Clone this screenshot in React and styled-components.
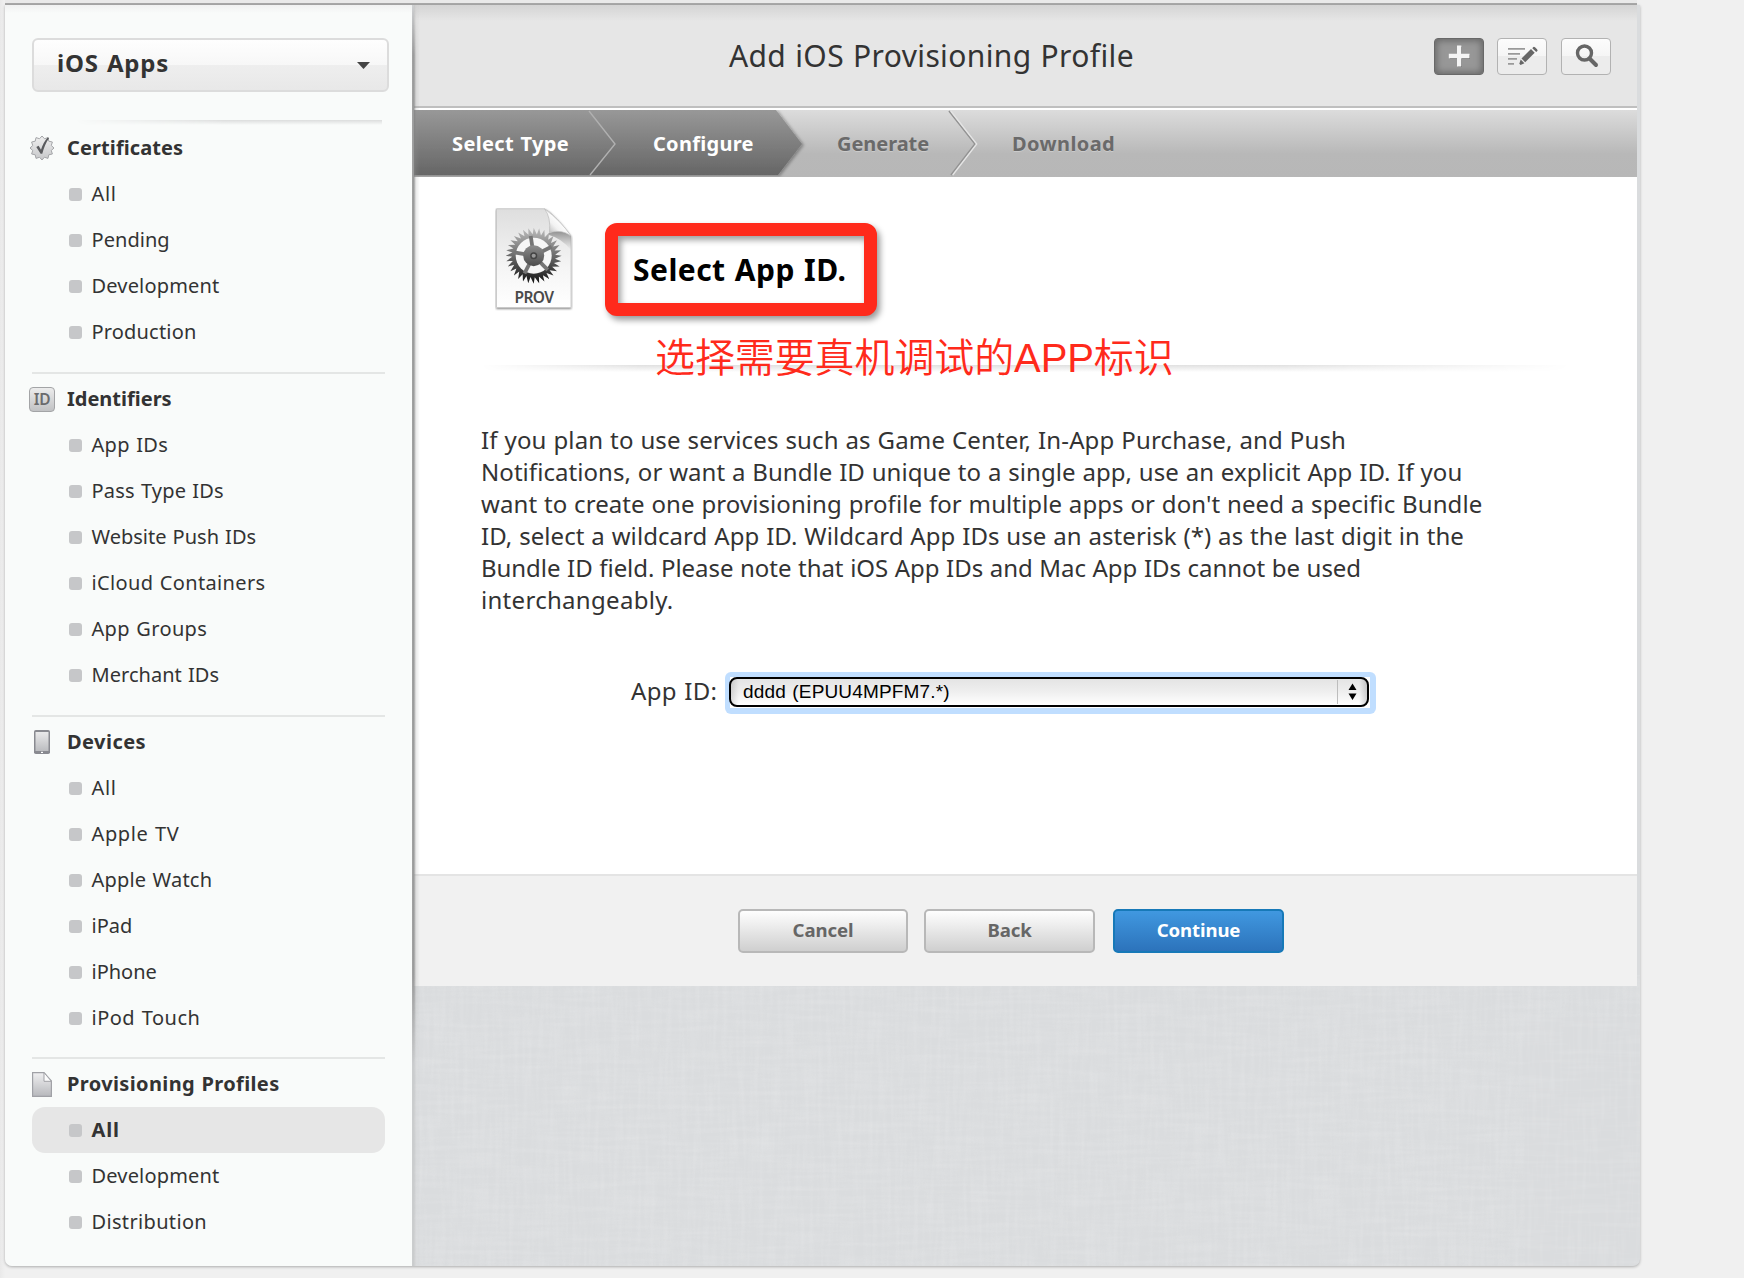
import React from "react";
import styled, { createGlobalStyle, css } from "styled-components";

const GlobalStyle = createGlobalStyle`
  * { box-sizing: border-box; }
  body {
    margin: 0;
    background: #f0f0f0;
    color: #333;
    font-family: "Noto Sans", "Open Sans", "Noto Sans CJK SC", sans-serif;
    word-spacing: 0.056em;
    overflow: hidden;
  }
`;

/* ---------- shell ---------- */

const Page = styled.div`
  width: 1744px;
  height: 1278px;
  padding-left: 5px;
  background: linear-gradient(to right, #e9e9e9 0, #f0f0f0 5px);
`;

const TopStrip = styled.div`
  width: 1632px;
  height: 5px;
  background: #e9e9e9;
  border-bottom: 2px solid #a9a9a9;
`;

const Shell = styled.div`
  position: relative;
  display: flex;
  width: 1635px;
  height: 1261px;
  overflow: hidden;
  border-radius: 0 0 7px 7px;
  box-shadow: 0 1px 3px rgba(0, 0, 0, 0.28);
  background-color: #dadcde;
`;

const Linen = styled.svg`
  position: absolute;
  inset: 0;
`;

/* ---------- sidebar ---------- */

const Sidebar = styled.aside`
  position: relative;
  z-index: 1;
  display: flex;
  flex-direction: column;
  width: 407px;
  flex: none;
  padding: 33px 0 0 27px;
  background: linear-gradient(#f0f1f1, #f9fbfa 8px);
`;

const SidebarEdge = styled.div`
  position: relative;
  z-index: 1;
  flex: none;
  width: 8px;
  margin-right: -6px;
  background: linear-gradient(to right, #a3a3a3 0, rgba(130, 130, 130, 0.75) 2px, rgba(150, 150, 150, 0.2) 4px, rgba(160, 160, 160, 0) 8px);
  -webkit-mask-image: linear-gradient(rgba(0, 0, 0, 0.2), #000 50px, #000 970px, rgba(0, 0, 0, 0.25) 1060px);
  mask-image: linear-gradient(rgba(0, 0, 0, 0.2), #000 50px, #000 970px, rgba(0, 0, 0, 0.25) 1060px);
`;

const TeamPicker = styled.button`
  display: flex;
  flex: none;
  align-items: center;
  justify-content: space-between;
  width: 357px;
  height: 54px;
  padding: 0 17px 4px 23px;
  border: 2px solid #dcdcdc;
  border-radius: 6px;
  background: linear-gradient(#fefefe, #f7f7f7 50%, #eeeeee 50%, #e8e8e8);
  color: #333;
  font: bold 24px/40px "Noto Sans", sans-serif;
  letter-spacing: 0.75px;
  word-spacing: 0.056em;

  svg {
    margin-top: 4px;
  }
`;

const PickerRule = styled.div`
  flex: none;
  width: 317px;
  height: 5px;
  margin: 28px 0 0 33px;
  background: linear-gradient(#dcdddd, #f9fbfa);
  -webkit-mask-image: linear-gradient(to right, transparent 10px, #000 160px);
  mask-image: linear-gradient(to right, transparent 10px, #000 160px);
`;

const Section = styled.section`
  flex: none;
  width: 353px;
  ${(p) =>
    p.$gap &&
    css`
      margin-top: ${p.$gap}px;
      padding-top: 2px;
      border-top: 2px solid #e4e6e5;
    `}
`;

const SectionTitle = styled.h3`
  display: flex;
  align-items: center;
  height: 46px;
  margin: 0;
  font-size: 20px;
  font-weight: 700;
  line-height: 46px;
  letter-spacing: ${(p) => p.$track || 0}px;
`;

const SectionIcon = styled.span`
  display: flex;
  justify-content: center;
  flex: none;
  width: 26px;
  margin: 0 12px 0 -3px;
`;

const Label = styled.span`
  height: 46px;
  white-space: nowrap;
`;

const Item = styled.div`
  display: flex;
  align-items: center;
  height: 46px;
  padding-left: 37px;
  border-radius: 13px;
  font-size: 20px;
  line-height: 46px;
  letter-spacing: ${(p) => p.$track || 0}px;
  ${(p) =>
    p.$selected &&
    css`
      background: #e6e6e6;
      font-weight: 700;
    `}
`;

const Bullet = styled.span`
  flex: none;
  width: 13px;
  height: 13px;
  margin: 0 9.5px 0 0;
  border-radius: 3px;
  background: #c6c7c9;
`;

/* ---------- main column ---------- */

const Main = styled.main`
  position: relative;
  display: flex;
  flex-direction: column;
  width: 1223px;
`;

const Header = styled.header`
  display: flex;
  align-items: center;
  justify-content: flex-end;
  flex: none;
  height: 105px;
  padding: 0 26px 4px 0;
  border-bottom: 2px solid #fff;
  background:
    linear-gradient(#bfbfbf, #bfbfbf) bottom / 100% 2px no-repeat,
    linear-gradient(#d4d4d4, #e6e6e6 16px);
`;

const Title = styled.h1`
  flex: 1;
  margin: 3px 0 0;
  padding-left: 315px;
  font-size: 30px;
  font-weight: 400;
  line-height: 40px;
  letter-spacing: 0.37px;
  white-space: nowrap;
`;

const Tools = styled.div`
  display: flex;
  gap: 13px;
  margin-top: 4px;
`;

const ToolButton = styled.button`
  display: flex;
  align-items: center;
  justify-content: center;
  width: 50px;
  height: 37px;
  padding: 0;
  border: 1.5px solid #b2b2b2;
  border-radius: 4px;
  background: linear-gradient(#fcfcfc, #f5f5f5 50%, #ececec 50%, #ececec);
  ${(p) =>
    p.$active &&
    css`
      border-color: #686868;
      background: #979797;
      box-shadow: inset 0 0 6px 2px #6a6a6a;
    `}

  svg {
    margin-top: -2px;
  }

  &:last-child {
    margin-left: 1px;
    padding-left: 2px;
  }
`;

const Steps = styled.nav`
  position: relative;
  flex: none;
  display: flex;
  height: 67px;
  background: linear-gradient(#dcdcdc, #b8b8b8 44px, #b7b7b7);
`;

const StepShapes = styled.svg`
  position: absolute;
  inset: 0;
`;

const Step = styled.div`
  position: relative;
  width: ${(p) => p.$w}px;
  padding-left: ${(p) => p.$pad}px;
  font-size: 20px;
  font-weight: 700;
  line-height: 67px;
  white-space: nowrap;
  letter-spacing: ${(p) => p.$track || 0}px;
  color: ${(p) => (p.$done ? "#fff" : "#6a6a6a")};
  text-shadow: ${(p) => (p.$done ? "none" : "0 1px 0 rgba(255,255,255,.25)")};
`;

const Content = styled.section`
  position: relative;
  flex: none;
  height: 697px;
  padding: 29px 0 0 67px;
  background: #fff;
`;

const Hero = styled.div`
  display: flex;
  height: 159px;
  padding-left: 14px;
`;

const ProvIcon = styled.svg`
  flex: none;
  margin-top: 2px;
`;

const Callout = styled.div`
  width: 272px;
  height: 93px;
  margin: 17px 0 0 32px;
  padding-left: 15px;
  border: 13px solid #ff2a1b;
  border-radius: 12px;
  background: #fff;
  box-shadow: 3px 4px 6px rgba(0, 0, 0, 0.4), inset 3px 4px 6px rgba(0, 0, 0, 0.38);
`;

const Heading = styled.h2`
  margin: 0;
  color: #000;
  font-size: 30px;
  font-weight: 700;
  line-height: 67px;
  letter-spacing: 0.47px;
  white-space: nowrap;
`;

const HeroRule = styled.div`
  width: 1090px;
  height: 7px;
  background: linear-gradient(#e0e0e0, #fff);
  -webkit-mask-image: linear-gradient(to right, transparent, #000 160px, #000 800px, transparent);
  mask-image: linear-gradient(to right, transparent, #000 160px, #000 800px, transparent);
`;

const Note = styled.div`
  position: absolute;
  left: 241px;
  top: 152px;
  color: #ff2a1b;
  font: 350 40px/58px "Liberation Sans", "Noto Sans CJK SC", sans-serif;
  letter-spacing: -0.1px;
  white-space: nowrap;
`;

const Copy = styled.p`
  display: flex;
  flex-direction: column;
  margin: 52px 0 0;
  font-size: 24px;
  line-height: 32px;
`;

const Line = styled.span`
  white-space: nowrap;
  word-spacing: 0.02em;
  letter-spacing: ${(p) => p.$track}px;
`;

const Field = styled.div`
  display: flex;
  align-items: center;
  height: 42px;
  margin: 56px 0 0 150px;
`;

const FieldLabel = styled.label`
  width: 94px;
  height: 42px;
  font-size: 24px;
  line-height: 38px;
  letter-spacing: 0.3px;
  white-space: nowrap;
`;

const FocusRing = styled.div`
  width: 651px;
  height: 42px;
  padding: 5px 7px 6px 4px;
  border-radius: 6px;
  background: linear-gradient(#fff, #fff) 5px 5px / 640px 31px no-repeat, #c0deff;
`;

const Select = styled.div`
  display: flex;
  align-items: center;
  height: 30px;
  padding: 0 10px 0 12px;
  border: 2px solid #000;
  border-radius: 8px;
  background:
    linear-gradient(to right, rgba(0, 0, 0, 0.12), transparent 8px, transparent 628px, rgba(0, 0, 0, 0.16)),
    linear-gradient(#e4e4e4, #efefef 50%, #fff);
  color: #000;
  font: 19px/24px "Liberation Sans", sans-serif;
`;

const SelectValue = styled.span`
  flex: 1;
  letter-spacing: 0.17px;
`;

const SelectArrows = styled.span`
  display: flex;
  justify-content: flex-end;
  width: 20px;
  height: 24px;
  border-left: 1.5px solid #bdbdbd;
`;

const Footer = styled.footer`
  display: flex;
  flex: none;
  height: 112px;
  padding: 33px 0 0 324px;
  border-top: 2px solid #e4e4e4;
  background: #f1f1f1;
`;

const Button = styled.button`
  width: ${(p) => p.$w || 171}px;
  height: 44px;
  margin-right: ${(p) => p.$after || 0}px;
  padding: 0 0 2px;
  border: 2px solid ${(p) => (p.$primary ? "#1779b8" : "#b8b8b8")};
  border-radius: 5px;
  background: ${(p) =>
    p.$primary ? "linear-gradient(#4098e0, #2c73bb)" : "linear-gradient(#fefefe, #cfcfcf)"};
  color: ${(p) => (p.$primary ? "#fff" : "#666")};
  font: bold 18.6px/36px "Noto Sans", sans-serif;
  letter-spacing: -0.1px;
`;

/* ---------- drawings ---------- */

const polar = (cx, cy, r, a) =>
  `${(cx + r * Math.cos(a)).toFixed(2)},${(cy + r * Math.sin(a)).toFixed(2)}`;

const star = (cx, cy, outer, inner, n, skew = 0) =>
  Array.from({ length: n }, (_, i) => {
    const a = (i / n) * Math.PI * 2 - Math.PI / 2;
    return `${polar(cx, cy, outer, a)} ${polar(cx, cy, inner, a + Math.PI / n + skew)}`;
  }).join(" ");

const LinenTexture = () => (
  <Linen width="1635" height="1261">
    <defs>
      <filter id="weft" x="0" y="0" width="100%" height="100%">
        <feTurbulence type="fractalNoise" baseFrequency="0.018 0.22" numOctaves="2" seed="4" />
        <feColorMatrix values="0 0 0 0 1  0 0 0 0 1  0 0 0 0 1  0.9 0 0 0 -0.34" />
      </filter>
      <filter id="warp" x="0" y="0" width="100%" height="100%">
        <feTurbulence type="fractalNoise" baseFrequency="0.22 0.018" numOctaves="2" seed="9" />
        <feColorMatrix values="0 0 0 0 1  0 0 0 0 1  0 0 0 0 1  0.9 0 0 0 -0.34" />
      </filter>
    </defs>
    <rect x="409" y="970" width="1226" height="291" filter="url(#weft)" opacity=".22" />
    <rect x="409" y="970" width="1226" height="291" filter="url(#warp)" opacity=".22" />
  </Linen>
);

const SealIcon = () => (
  <svg width="24" height="26" viewBox="0 0 24 26">
    <defs>
      <linearGradient id="seal" x1="0" y1="0" x2="0" y2="1">
        <stop offset="0" stopColor="#f0f0f0" />
        <stop offset="1" stopColor="#c6c7c9" />
      </linearGradient>
    </defs>
    <polygon points={star(12, 13, 12, 9.6, 12)} fill="url(#seal)" stroke="#a4a5a8" strokeWidth="1" />
    <path d="M6.300 11.900l2.300-1.200 2.400 4C12.500 9.800 14.500 5.600 18 2.200l1 1.100C16 7.600 13.900 12.600 12.300 18.800h-1.700z" fill="#5a5b5e" />
  </svg>
);

const IdBadge = styled.span`
  width: 26px;
  height: 25px;
  border: 1.5px solid #a3a4a6;
  border-radius: 4px;
  background: linear-gradient(#ececec, #c1c2c4);
  color: #6a6b6d;
  font: 600 15.5px/22px "Noto Sans", sans-serif;
  text-align: center;
  letter-spacing: -0.2px;
`;

const DeviceIcon = () => (
  <svg width="16" height="24" viewBox="0 0 16 24">
    <defs>
      <linearGradient id="screen" x1="0" y1="0" x2="0" y2="1">
        <stop offset="0" stopColor="#e9e9ea" />
        <stop offset="1" stopColor="#bcbdc0" />
      </linearGradient>
    </defs>
    <rect width="16" height="24" rx="1.800" fill="#898a90" />
    <rect x="1.500" y="2" width="13" height="19" fill="url(#screen)" />
    <rect x="7" y="21.800" width="2" height="1.200" fill="#fff" />
  </svg>
);

const PageIcon = () => (
  <svg width="20" height="25" viewBox="0 0 20 25">
    <defs>
      <linearGradient id="sheet" x1="0" y1="0" x2="0" y2="1">
        <stop offset="0" stopColor="#f0f0f1" />
        <stop offset="1" stopColor="#b7b8bc" />
      </linearGradient>
    </defs>
    <path d="M.6.6H12L19.400 9V24.400H.6z" fill="url(#sheet)" stroke="#a0a1a6" strokeWidth="1.200" />
    <path d="M12 .6V9.300H19.400z" fill="#fcfcfc" stroke="#a0a1a6" strokeWidth="1" />
  </svg>
);

const PlusIcon = () => (
  <svg width="24" height="24" viewBox="0 0 24 24">
    <path d="M11 3h4v8h8v4h-8v8h-4v-8H3v-4h8z" fill="#555" opacity=".6" />
    <path d="M10 1.500h4.300v8.300h8.200v4.400h-8.200v8.300H10v-8.300H1.800V9.800H10z" fill="#f4f4f4" />
  </svg>
);

const EditIcon = () => (
  <svg width="32" height="22" viewBox="0 0 32 22">
    <path d="M2 3.800H19M2 8.800H14M2 13.800H11M2 18.800H8" stroke="#999" strokeWidth="1.800" />
    <path d="M15.500 13.500L25 4l3.700 3.700L19.200 17.200z" fill="#666" />
    <path d="M14.700 14.500l3.700 3.700-3.800 1.900-1.300-1.300z" fill="#666" />
    <path d="M26.300 3.200q1.200-2.400 2.700-1l2 2q1.200 1.300-.8 2.900z" fill="#666" />
  </svg>
);

const SearchIcon = () => (
  <svg width="24" height="24" viewBox="0 0 24 24">
    <circle cx="9.500" cy="9" r="7" fill="none" stroke="#666" strokeWidth="3.400" />
    <path d="M14.500 14.500L21 21" stroke="#666" strokeWidth="4" strokeLinecap="round" />
  </svg>
);

const Caret = () => (
  <svg width="13" height="7" viewBox="0 0 13 7">
    <path d="M0 0h13L6.500 7z" fill="#444" />
  </svg>
);

const UpDown = () => (
  <svg width="9" height="24" viewBox="0 0 9 24">
    <path d="M4.500 3.500l4 6.500h-8zM.5 13.500h8l-4 6.500z" fill="#000" />
  </svg>
);

const spokes = [0, 1, 2, 3, 4].map((i) => {
  const a = (i / 5) * Math.PI * 2 - Math.PI / 2 - 0.15;
  const [x2, y2] = polar(38.7, 47.7, 20, a).split(",");
  return { x2, y2 };
});

const ProvFile = () => (
  <ProvIcon width="78" height="106" viewBox="0 0 78 106">
    <defs>
      <linearGradient id="paper" x1="0" y1="0" x2="0" y2="1">
        <stop offset="0" stopColor="#dedede" />
        <stop offset=".6" stopColor="#f5f5f5" />
        <stop offset="1" stopColor="#fff" />
      </linearGradient>
      <linearGradient id="gear" gradientUnits="userSpaceOnUse" x1="0" y1="20" x2="0" y2="75">
        <stop offset="0" stopColor="#bdbdbd" />
        <stop offset=".5" stopColor="#6c6c6c" />
        <stop offset="1" stopColor="#141414" />
      </linearGradient>
      <linearGradient id="hub" x1="0" y1="0" x2="0" y2="1">
        <stop offset="0" stopColor="#8d8d8d" />
        <stop offset="1" stopColor="#4c4c4c" />
      </linearGradient>
      <linearGradient id="curl" x1=".1" y1=".9" x2=".6" y2=".4">
        <stop offset="0" stopColor="#b5b5b5" />
        <stop offset=".55" stopColor="#f2f2f2" />
        <stop offset="1" stopColor="#fff" />
      </linearGradient>
      <linearGradient id="fold" x1="0" y1="0" x2="0" y2="1">
        <stop offset="0" stopColor="#777" stopOpacity=".75" />
        <stop offset="1" stopColor="#999" stopOpacity="0" />
      </linearGradient>
      <filter id="soft" x="-10%" y="-10%" width="120%" height="120%">
        <feDropShadow dx="0" dy="1" stdDeviation="1" floodOpacity=".5" />
      </filter>
    </defs>
    <path d="M1.500 .8H49.500Q58 4 76 28V99.500H1.500z" fill="url(#paper)" stroke="#c4c4c4" strokeWidth=".8" filter="url(#soft)" />
    <path d="M54 25Q67 21 76 28V42Q66 30 54 27z" fill="url(#fold)" />
    <polygon points={star(38.7, 47.7, 28, 21.5, 32, 0.05)} fill="url(#gear)" />
    <circle cx="38.700" cy="47.700" r="18" fill="#f6f6f6" />
    {spokes.map((s) => (
      <line key={s.x2} x1="38.700" y1="47.700" x2={s.x2} y2={s.y2} stroke="#757575" strokeWidth="3.800" />
    ))}
    <circle cx="38.700" cy="47.700" r="10.500" fill="url(#hub)" />
    <circle cx="38.700" cy="47.700" r="2.800" fill="#999" stroke="#444" strokeWidth="1.500" />
    <path d="M49.500 .8Q56 9 54.500 24.500Q67 21 76 28Q66 13 49.500 .8z" fill="url(#curl)" stroke="#bcbcbc" strokeWidth=".7" />
    <text x="39.300" y="94.500" textAnchor="middle" fontFamily="Noto Sans, sans-serif" fontSize="15.500" fontWeight="600" fill="#4a4a4a" textLength="39.500" lengthAdjust="spacing">
      PROV
    </text>
  </ProvIcon>
);

const StepBackdrop = () => (
  <StepShapes width="1223" height="67">
    <defs>
      <linearGradient id="done" x1="0" y1="0" x2="0" y2="1">
        <stop offset="0" stopColor="#989898" />
        <stop offset="1" stopColor="#666" />
      </linearGradient>
      <filter id="tip" x="-5%" y="-5%" width="110%" height="110%">
        <feDropShadow dx="2" dy="1" stdDeviation="1.500" floodOpacity=".3" />
      </filter>
    </defs>
    <path d="M-10 0H362L388 34L364 65H-10z" fill="url(#done)" filter="url(#tip)" />
    <path d="M175 1L201 34L176 65" fill="none" stroke="#b0b0b0" strokeWidth="1.400" />
    <path d="M535 1L561 34L537 65" fill="none" stroke="#939393" strokeWidth="1.700" />
    <path d="M536.700 1L562.700 34L538.700 65" fill="none" stroke="#e4e4e4" strokeWidth="1.400" />
  </StepShapes>
);

/* ---------- data ---------- */

const sections = [
  {
    title: "Certificates",
    track: 0.1,
    icon: <SealIcon />,
    items: [["All", 0.7], ["Pending", 0.05], ["Development", 0.17], ["Production", 0.18]],
  },
  {
    title: "Identifiers",
    track: 0,
    gap: 17,
    icon: <IdBadge>ID</IdBadge>,
    items: [
      ["App IDs", 0.32],
      ["Pass Type IDs", 0.17],
      ["Website Push IDs", 0],
      ["iCloud Containers", 0.35],
      ["App Groups", 0.34],
      ["Merchant IDs", 0.04],
    ],
  },
  {
    title: "Devices",
    track: 0.45,
    gap: 17,
    icon: <DeviceIcon />,
    items: [["All", 0.7], ["Apple TV", 0.6], ["Apple Watch", 0.2], ["iPad", 0], ["iPhone", 0], ["iPod Touch", 0.5]],
  },
  {
    title: "Provisioning Profiles",
    track: 0.37,
    gap: 16,
    icon: <PageIcon />,
    selected: "All",
    items: [["All", 0.8], ["Development", 0.17], ["Distribution", 0.34]],
  },
];

const steps = [
  { name: "Select Type", w: 201, pad: 38, track: 0.36, done: true },
  { name: "Configure", w: 187, pad: 38, track: 0.28, done: true },
  { name: "Generate", w: 173, pad: 35, track: -0.05 },
  { name: "Download", w: 200, pad: 37, track: 0.4 },
];

const copy = [
  ["If you plan to use services such as Game Center, In-App Purchase, and Push", 0.14],
  ["Notifications, or want a Bundle ID unique to a single app, use an explicit App ID. If you", 0.06],
  ["want to create one provisioning profile for multiple apps or don't need a specific Bundle", 0.08],
  ["ID, select a wildcard App ID. Wildcard App IDs use an asterisk (*) as the last digit in the", 0.075],
  ["Bundle ID field. Please note that iOS App IDs and Mac App IDs cannot be used", -0.055],
  ["interchangeably.", 0.3],
];

export default function App() {
  return (
    <Page>
      <GlobalStyle />
      <TopStrip />
      <Shell>
        <LinenTexture />
        <Sidebar>
          <TeamPicker>
            iOS Apps
            <Caret />
          </TeamPicker>
          <PickerRule />
          {sections.map((s) => (
            <Section key={s.title} $gap={s.gap}>
              <SectionTitle $track={s.track}>
                <SectionIcon>{s.icon}</SectionIcon>
                <Label>{s.title}</Label>
              </SectionTitle>
              {s.items.map(([name, track]) => (
                <Item key={name} $track={track} $selected={s.selected === name}>
                  <Bullet />
                  <Label>{name}</Label>
                </Item>
              ))}
            </Section>
          ))}
        </Sidebar>
        <SidebarEdge />
        <Main>
          <Header>
            <Title>Add iOS Provisioning Profile</Title>
            <Tools>
              <ToolButton $active aria-label="Add">
                <PlusIcon />
              </ToolButton>
              <ToolButton aria-label="Edit">
                <EditIcon />
              </ToolButton>
              <ToolButton aria-label="Search">
                <SearchIcon />
              </ToolButton>
            </Tools>
          </Header>
          <Steps>
            <StepBackdrop />
            {steps.map((s) => (
              <Step key={s.name} $w={s.w} $pad={s.pad} $done={s.done} $track={s.track}>
                {s.name}
              </Step>
            ))}
          </Steps>
          <Content>
            <Hero>
              <ProvFile />
              <Callout>
                <Heading>Select App ID.</Heading>
              </Callout>
            </Hero>
            <HeroRule />
            <Note>选择需要真机调试的APP标识</Note>
            <Copy>
              {copy.map(([text, track]) => (
                <Line key={text} $track={track}>
                  {text}
                </Line>
              ))}
            </Copy>
            <Field>
              <FieldLabel>App ID:</FieldLabel>
              <FocusRing>
                <Select>
                  <SelectValue>dddd (EPUU4MPFM7.*)</SelectValue>
                  <SelectArrows>
                    <UpDown />
                  </SelectArrows>
                </Select>
              </FocusRing>
            </Field>
          </Content>
          <Footer>
            <Button $w={170} $after={16}>Cancel</Button>
            <Button $after={18}>Back</Button>
            <Button $primary>Continue</Button>
          </Footer>
        </Main>
      </Shell>
    </Page>
  );
}
